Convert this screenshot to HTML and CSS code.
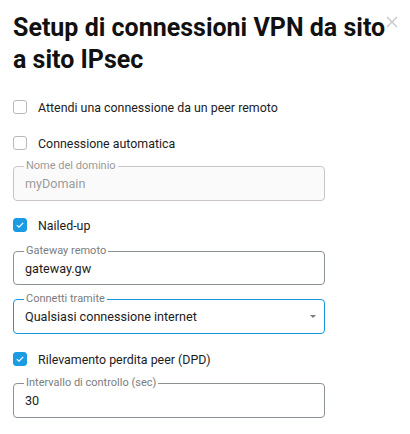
FILE: index.html
```html
<!DOCTYPE html>
<html lang="it">
<head>
<meta charset="utf-8">
<title>Setup VPN</title>
<link rel="stylesheet" href="styles.css">
</head>
<body>
<div class="dialog">
  <button class="close" aria-label="Chiudi">
    <svg width="12" height="12" viewBox="0 0 12 12"><path d="M1 1L11 11M11 1L1 11" stroke="#c4c4c4" stroke-width="1.2" fill="none"/></svg>
  </button>
  <h1 class="title">Setup di connessioni VPN da sito a sito IPsec</h1>

  <label class="check row-a">
    <span class="box"></span>
    <span class="check-text">Attendi una connessione da un peer remoto</span>
  </label>

  <label class="check row-b">
    <span class="box"></span>
    <span class="check-text">Connessione automatica</span>
  </label>

  <div class="field field-disabled row-c">
    <span class="field-label">Nome del dominio</span>
    <span class="field-value">myDomain</span>
  </div>

  <label class="check row-d">
    <span class="box box-on">
      <svg width="8" height="6" viewBox="0 0 8 6"><path d="M0.8 3.1L3 5.1L7.2 0.9" stroke="#fff" stroke-width="1.2" fill="none"/></svg>
    </span>
    <span class="check-text">Nailed-up</span>
  </label>

  <div class="field row-e">
    <span class="field-label">Gateway remoto</span>
    <span class="field-value">gateway.gw</span>
  </div>

  <div class="field field-focus row-f">
    <span class="field-label">Connetti tramite</span>
    <span class="field-value">Qualsiasi connessione internet</span>
    <span class="arrow"></span>
  </div>

  <label class="check row-g">
    <span class="box box-on">
      <svg width="8" height="6" viewBox="0 0 8 6"><path d="M0.8 3.1L3 5.1L7.2 0.9" stroke="#fff" stroke-width="1.2" fill="none"/></svg>
    </span>
    <span class="check-text">Rilevamento perdita peer (DPD)</span>
  </label>

  <div class="field row-h">
    <span class="field-label">Intervallo di controllo (sec)</span>
    <span class="field-value">30</span>
  </div>
</div>
</body>
</html>
```
FILE: styles.css
```css
* { box-sizing: border-box; }
html, body { margin: 0; padding: 0; background: #fff; }
body {
  font-family: Roboto, "Liberation Sans", Arial, sans-serif;
  color: #1c1c1c;
  width: 410px;
  height: 434px;
  overflow: hidden;
}
.dialog {
  position: relative;
  display: flex;
  flex-direction: column;
  padding: 0 0 0 13px;
  width: 410px;
}
.close {
  position: absolute;
  top: 16px;
  left: 386px;
  width: 12px;
  height: 12px;
  padding: 0;
  border: 0;
  background: transparent;
  display: block;
}
.close svg { display: block; }
.title {
  margin: 12px 0 0;
  font-size: 25px;
  line-height: 32px;
  font-weight: 700;
  color: #111;
  width: 376px;
}
.check {
  display: flex;
  align-items: center;
  height: 22px;
  gap: 11px;
}
.box {
  width: 14px;
  height: 14px;
  border: 1px solid #b9b9b9;
  border-radius: 3px;
  background: #fff;
  display: flex;
  align-items: center;
  justify-content: center;
  flex: none;
}
.box-on {
  background: #1b9be3;
  border-color: #1b9be3;
}
.box svg { display: block; }
.check-text {
  font-size: 12.4px;
  color: #1c1c1c;
}
.field {
  position: relative;
  width: 312px;
  height: 34px;
  border: 1px solid #8c9196;
  border-radius: 4px;
  display: flex;
  align-items: center;
  padding: 0 11px;
}
.field-disabled {
  background: #fafafa;
  border-color: #c9c5c7;
  height: 35px;
}
.field-focus {
  border-color: #1a96dc;
  height: 35px;
}
.field-label {
  position: absolute;
  left: 10px;
  top: -8px;
  padding: 0 2px;
  font-size: 11px;
  line-height: 13px;
  color: #7c7c7c;
  background: #fff;
}
.field-disabled .field-label {
  background: linear-gradient(#fff 50%, #fafafa 50%);
  color: #9a9a9a;
}
.field-value {
  font-size: 12.6px;
  color: #1c1c1c;
}
.field-disabled .field-value { color: #9c9c9c; }
.arrow {
  position: absolute;
  right: 8px;
  top: 15px;
  width: 0;
  height: 0;
  border-left: 3px solid transparent;
  border-right: 3px solid transparent;
  border-top: 3px solid #7a7a7a;
}
.row-a { margin-top: 20px; }
.row-b { margin-top: 14px; }
.row-c { margin-top: 12px; }
.row-d { margin-top: 13px; }
.row-e { margin-top: 15px; }
.row-f { margin-top: 14px; }
.row-g { margin-top: 14px; }
.row-h { margin-top: 13px; }
.row-h { height: 35px; }
```
